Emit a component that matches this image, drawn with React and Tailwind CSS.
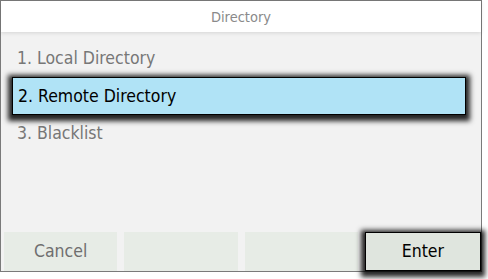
import React from "react";

const items = ["1. Local Directory", "2. Remote Directory", "3. Blacklist"];
const selected = 1;

const SoftKey = ({ label, active }) =>
  active ? (
    <div className="flex h-[39px] w-[117px] items-center justify-center border border-black bg-[#dfe5de] text-[17.5px] text-black shadow-[0_2px_5px_4px_rgba(0,0,0,0.85)]">
      {label}
    </div>
  ) : (
    <div className="flex h-[39px] w-[114px] items-center justify-center bg-[#e7ece6] text-[17.5px] text-[#6f6f6f]">
      {label}
    </div>
  );

export default function App() {
  return (
    <div
      className="h-[279px] w-[488px] bg-white"
      style={{ fontFamily: '"DejaVu Sans Condensed", "DejaVu Sans", sans-serif' }}
    >
      <div className="flex h-[272px] w-[482px] flex-col border border-[#7a7a7a] bg-[#f2f2f2]">
        {/* Header */}
        <div className="relative z-10 flex h-[31px] items-center justify-center bg-white pt-[3px] text-[14.5px] text-[#8a8a8a] shadow-[0_1px_4px_rgba(0,0,0,0.12)]">
          Directory
        </div>

        {/* List */}
        <div className="mt-[8px] flex flex-col">
          {items.map((item, i) =>
            i === selected ? (
              <div
                key={item}
                className="ml-[11px] mr-[15px] flex h-[38px] items-center border border-black bg-[#b0e3f6] pl-[5px] text-[17.5px] text-black shadow-[0_2px_5px_4px_rgba(0,0,0,0.85)]"
              >
                {item}
              </div>
            ) : (
              <div
                key={item}
                className={`ml-[11px] mr-[15px] flex items-center pl-[5px] text-[17.5px] text-[#777] ${i === 0 ? "h-[37px]" : "h-[36px]"}`}
              >
                {item}
              </div>
            )
          )}
        </div>

        {/* Softkeys */}
        <div className="mt-auto flex items-end gap-[7px] pl-[3px]">
          <SoftKey label="Cancel" />
          <SoftKey label="" />
          <SoftKey label="" />
          <SoftKey label="Enter" active />
        </div>
      </div>
    </div>
  );
}
